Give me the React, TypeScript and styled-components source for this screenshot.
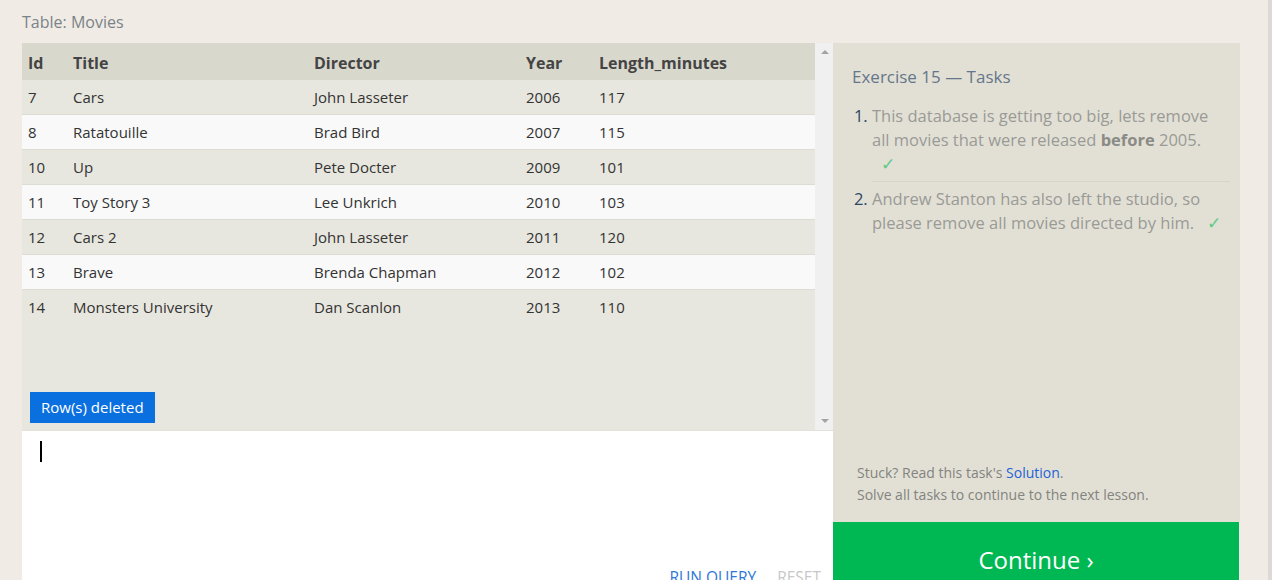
import styled, { createGlobalStyle } from 'styled-components'

const GlobalStyle = createGlobalStyle`
  html, body {
    margin: 0;
    padding: 0;
    background: #f0ece5;
    font-family: "Open Sans", "Liberation Sans", sans-serif;
    overflow: hidden;
  }
  body {
    border-right: 4px solid #dcd9d6;
  }
`

const Page = styled.div`
  padding: 10px 0 0 22px;
  width: 1218px;
  height: 580px;
`

const Caption = styled.div`
  font-size: 16px;
  line-height: 24px;
  color: #7b8288;
  height: 33px;
`

const Layout = styled.div`
  display: grid;
  grid-template-columns: 811px 407px;
  align-items: stretch;
`

const LeftColumn = styled.div`
  display: flex;
  flex-direction: column;
`

const ResultPanel = styled.div`
  display: flex;
  height: 387px;
  background: #e8e7df;
  border-bottom: 1px solid #e3e1d9;
`

const ResultBody = styled.div`
  flex: 1;
  display: flex;
  flex-direction: column;
`

const Table = styled.table`
  border-collapse: collapse;
  width: 793px;
  table-layout: fixed;
  font-size: 15px;
  color: #333;
`

const HeadCell = styled.th`
  height: 37px;
  padding: 2px 0 0 6px;
  box-sizing: border-box;
  background: #d9d8cc;
  text-align: left;
  font-size: 16px;
  font-weight: 700;
  color: #444;
`

const Row = styled.tr<{ $light: boolean }>`
  background: ${({ $light }) => ($light ? '#f9f9f9' : '#e8e7df')};
  border-top: 1px solid #dcdcd3;
  &:first-child {
    border-top: none;
  }
`

const Cell = styled.td`
  height: 34px;
  padding: 0 0 0 6px;
  white-space: nowrap;
`

const Badge = styled.div`
  margin: auto 0 7px 8px;
  align-self: flex-start;
  height: 31px;
  line-height: 31px;
  padding: 0 11px;
  background: #0a6fdf;
  color: #fff;
  font-size: 15px;
`

const ScrollTrack = styled.div`
  width: 17px;
  background: #f0f0f0;
  display: flex;
  flex-direction: column;
  justify-content: space-between;
  align-items: center;
  padding: 7px 0 7px 1px;
`

const Arrow = styled.div<{ $down?: boolean }>`
  width: 0;
  height: 0;
  border-left: 4px solid transparent;
  border-right: 4px solid transparent;
  ${({ $down }) =>
    $down ? 'border-top: 4px solid #a3a3a3;' : 'border-bottom: 4px solid #a3a3a3;'}
`

const Editor = styled.div`
  background: #fff;
  height: 170px;
  display: flex;
  flex-direction: column;
  padding: 10px 12px 0 18px;
  box-sizing: border-box;
`

const Caret = styled.div`
  width: 2px;
  height: 21px;
  background: #000;
`

const EditorActions = styled.div`
  margin-top: auto;
  display: flex;
  justify-content: flex-end;
  gap: 21px;
  font-size: 15.5px;
  line-height: 20px;
  height: 34px;
`

const Action = styled.span<{ $muted?: boolean }>`
  color: ${({ $muted }) => ($muted ? '#c8c8c8' : '#2e78d8')};
  text-transform: uppercase;
`

const RightColumn = styled.div`
  display: flex;
  flex-direction: column;
`

const TaskPanel = styled.div`
  height: 479px;
  box-sizing: border-box;
  background: #e2e0d5;
  display: flex;
  flex-direction: column;
  padding: 22px 10px 16px 19px;
`

const TaskTitle = styled.div`
  font-size: 17px;
  line-height: 24px;
  color: #66768a;
  margin-bottom: 12px;
`

const TaskList = styled.ol`
  margin: 0;
  padding: 0 0 0 20px;
  font-size: 16.5px;
  line-height: 24px;
  color: #9a9a96;
`

const TaskItem = styled.li`
  padding: 3px 6px 5px 0;
  &::marker {
    color: #2b4763;
  }
  & + & {
    border-top: 1px solid #d6d4ca;
    padding-top: 5px;
  }
`

const Strong = styled.b`
  color: #8a8a86;
`

const Check = styled.span`
  display: inline-block;
  margin-left: 9px;
  color: #5fcb86;
`

const Hint = styled.div`
  margin-top: auto;
  padding-left: 5px;
  font-size: 14px;
  line-height: 22px;
  color: #838380;
`

const SolutionLink = styled.a`
  color: #1f62d8;
  text-decoration: none;
`

const ContinueButton = styled.div`
  height: 76px;
  width: 406px;
  background: #00b853;
  color: #fff;
  font-size: 24px;
  display: flex;
  align-items: center;
  justify-content: center;
  padding-bottom: 2px;
  box-sizing: border-box;
`

const movies = [
  [7, 'Cars', 'John Lasseter', 2006, 117],
  [8, 'Ratatouille', 'Brad Bird', 2007, 115],
  [10, 'Up', 'Pete Docter', 2009, 101],
  [11, 'Toy Story 3', 'Lee Unkrich', 2010, 103],
  [12, 'Cars 2', 'John Lasseter', 2011, 120],
  [13, 'Brave', 'Brenda Chapman', 2012, 102],
  [14, 'Monsters University', 'Dan Scanlon', 2013, 110],
]

const columns = [
  { name: 'Id', width: 45 },
  { name: 'Title', width: 241 },
  { name: 'Director', width: 212 },
  { name: 'Year', width: 73 },
  { name: 'Length_minutes', width: 222 },
]

export default function App() {
  return (
    <>
      <GlobalStyle />
      <Page>
        <Caption>Table: Movies</Caption>
        <Layout>
          <LeftColumn>
            <ResultPanel>
              <ResultBody>
                <Table>
                  <colgroup>
                    {columns.map((c) => (
                      <col key={c.name} style={{ width: c.width }} />
                    ))}
                  </colgroup>
                  <thead>
                    <tr>
                      {columns.map((c) => (
                        <HeadCell key={c.name}>{c.name}</HeadCell>
                      ))}
                    </tr>
                  </thead>
                  <tbody>
                    {movies.map((m, i) => (
                      <Row key={m[0]} $light={i % 2 === 1}>
                        {m.map((v, j) => (
                          <Cell key={j}>{v}</Cell>
                        ))}
                      </Row>
                    ))}
                  </tbody>
                </Table>
                <Badge>Row(s) deleted</Badge>
              </ResultBody>
              <ScrollTrack>
                <Arrow />
                <Arrow $down />
              </ScrollTrack>
            </ResultPanel>
            <Editor>
              <Caret />
              <EditorActions>
                <Action>Run Query</Action>
                <Action $muted>Reset</Action>
              </EditorActions>
            </Editor>
          </LeftColumn>
          <RightColumn>
            <TaskPanel>
              <TaskTitle>Exercise 15 — Tasks</TaskTitle>
              <TaskList>
                <TaskItem>
                  This database is getting too big, lets remove all movies that were released{' '}
                  <Strong>before</Strong> 2005. <Check>✓</Check>
                </TaskItem>
                <TaskItem>
                  Andrew Stanton has also left the studio, so please remove all movies directed by
                  him. <Check>✓</Check>
                </TaskItem>
              </TaskList>
              <Hint>
                Stuck? Read this task's <SolutionLink href="#">Solution</SolutionLink>.
                <br />
                Solve all tasks to continue to the next lesson.
              </Hint>
            </TaskPanel>
            <ContinueButton>Continue ›</ContinueButton>
          </RightColumn>
        </Layout>
      </Page>
    </>
  )
}
